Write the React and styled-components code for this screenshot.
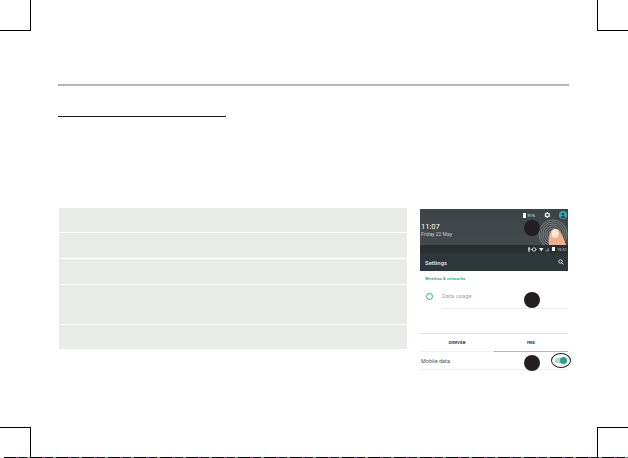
import React from 'react'
import styled, { createGlobalStyle } from 'styled-components'

const GlobalStyle = createGlobalStyle`
  html, body {
    margin: 0;
    padding: 0;
    background: #fff;
    font-family: "Roboto", "Liberation Sans", sans-serif;
  }
`

const Page = styled.div`
  position: relative;
  width: 628px;
  height: 458px;
  overflow: hidden;
  box-sizing: border-box;
  padding: 84px 59px 0 58px;
  background: #fff;
`

const CropMark = styled.div`
  position: absolute;
  width: 31px;
  height: 31px;
  box-sizing: border-box;
  ${p => (p.$top ? 'top: 0; border-bottom: 1px solid #000;' : 'bottom: 0; border-top: 1px solid #000;')}
  ${p => (p.$left ? 'left: 0; border-right: 1px solid #000;' : 'right: 0; border-left: 1px solid #000;')}
`

const BleedEdge = styled.div`
  position: absolute;
  left: 4px;
  right: 0;
  bottom: 0;
  height: 1px;
  background: repeating-linear-gradient(
    90deg,
    #000 0 12px,
    #c4566a 12px 13px,
    #3a4bb0 13px 15px,
    #111 15px 23px,
    #6fb58a 23px 25px,
    #888 25px 26px
  );
`

const TitleRule = styled.div`
  height: 2px;
  background: #b5b5b5;
`

const HeadingLine = styled.div`
  width: 168px;
  height: 1px;
  margin-top: 30px;
  background: #1a1a1a;
`

const Content = styled.div`
  display: flex;
  align-items: flex-start;
  margin-top: 91px;
`

const Steps = styled.div`
  display: flex;
  flex-direction: column;
  gap: 1px;
  width: 348px;
  margin-left: 1px;
`

const Step = styled.div`
  height: ${p => p.$h}px;
  background: #e9ebe8;
`

const Shot = styled.div`
  position: relative;
  width: 148px;
  height: 163px;
  margin: 1px 0 0 13px;
  color: #555;
`

const Shade = styled.div`
  position: relative;
  height: 36px;
  overflow: hidden;
  box-sizing: border-box;
  padding: 13px 0 0 1px;
  background: linear-gradient(180deg, #3c4346, #44494c);
  color: #fff;
`

const Clock = styled.div`
  font-size: 7.5px;
  font-weight: 400;
  line-height: 9px;
`

const DateLine = styled.div`
  font-size: 5px;
  line-height: 6px;
  color: #c9cdcf;
`

const QuickIcons = styled.div`
  position: absolute;
  top: 2px;
  right: 1px;
  display: flex;
  align-items: center;
  gap: 8px;
`

const BatteryGroup = styled.div`
  display: flex;
  align-items: center;
  gap: 2px;
  font-size: 4px;
  color: #e8e8e8;
`

const Battery = styled.span`
  display: block;
  width: 3px;
  height: ${p => p.$h || 5}px;
  background: #f4f4f4;
`

const StatusBar = styled.div`
  display: flex;
  align-items: center;
  justify-content: flex-end;
  gap: 2px;
  height: 8px;
  padding-right: 1px;
  background: #2a2e30;
  color: #d8dadb;
  font-size: 4px;
`

const SettingsBar = styled.div`
  display: flex;
  align-items: center;
  justify-content: space-between;
  height: 18px;
  padding: 0 4px 0 5px;
  background: #2d363a;
  color: #e6e8e8;
  font-size: 6px;
  font-weight: 500;
`

const SectionLabel = styled.div`
  margin: 5px 0 0 5px;
  font-size: 4.400px;
  line-height: 5px;
  font-weight: 700;
  color: #3fae96;
`

const UsageRow = styled.div`
  display: flex;
  align-items: center;
  height: 25px;
  margin-top: 3px;
`

const RingSlot = styled.div`
  box-sizing: border-box;
  width: 22px;
  padding-left: 6px;
`

const Ring = styled.span`
  display: block;
  box-sizing: border-box;
  width: 7px;
  height: 7px;
  border-radius: 50%;
  border: 1.500px solid #35a78e;
`

const UsageLabel = styled.div`
  flex: 1;
  align-self: stretch;
  display: flex;
  align-items: center;
  border-bottom: 1px solid #eceeee;
  font-size: 5.500px;
  letter-spacing: 0.2px;
  color: #9a9e9f;
`

const Tabs = styled.div`
  display: flex;
  height: 18px;
  margin-top: 24px;
  border-top: 1px solid #e3e5e5;
`

const Tab = styled.div`
  flex: 1;
  display: flex;
  align-items: center;
  justify-content: center;
  box-sizing: border-box;
  border-bottom: 1px solid ${p => (p.$active ? '#7fcfba' : '#eef0f0')};
  font-size: 3.500px;
  font-weight: 700;
  color: #333;
`

const DataRow = styled.div`
  display: flex;
  align-items: center;
  height: 17px;
  padding-left: 1px;
  border-bottom: 1px solid #eef0f0;
  font-size: 5.500px;
  color: #555;
`

const Callout = styled.div`
  position: absolute;
  left: 104px;
  top: ${p => p.$top}px;
  width: 16px;
  height: 16px;
  border-radius: 50%;
  background: #231f20;
`

const ToggleMark = styled.div`
  position: absolute;
  left: 131px;
  top: 144px;
  width: 20px;
  height: 15px;
  box-sizing: border-box;
  border: 1px solid #222;
  border-radius: 50%;
`

const ToggleTrack = styled.div`
  position: absolute;
  left: 3px;
  top: 4px;
  width: 12px;
  height: 5px;
  border-radius: 3px;
  background: #a5dccb;
`

const ToggleKnob = styled.div`
  position: absolute;
  left: 8px;
  top: 3px;
  width: 7px;
  height: 7px;
  border-radius: 50%;
  background: #2f9f88;
`

const Touch = styled.svg`
  position: absolute;
  right: 0;
  bottom: 0;
`

const Gear = () => (
  <svg width="8" height="8" viewBox="0 0 24 24" fill="#f2f2f2">
    <path d="M19.400 13a7.500 7.500 0 0 0 0-2l2.100-1.600-2-3.500-2.500 1a7.500 7.500 0 0 0-1.700-1L15 3.300h-4l-.4 2.600a7.500 7.500 0 0 0-1.700 1l-2.500-1-2 3.500L6.500 11a7.500 7.500 0 0 0 0 2l-2.100 1.600 2 3.500 2.500-1a7.500 7.500 0 0 0 1.700 1l.4 2.600h4l.4-2.600a7.500 7.500 0 0 0 1.700-1l2.500 1 2-3.500zM13 15.500a3.500 3.500 0 1 1 0-7 3.500 3.500 0 0 1 0 7z" />
  </svg>
)

const Avatar = () => (
  <svg width="8" height="8" viewBox="0 0 24 24">
    <circle cx="12" cy="12" r="12" fill="#2fa9b5" />
    <circle cx="12" cy="9" r="4" fill="#35464c" />
    <path d="M4.500 19c1.500-3.500 4.500-5 7.500-5s6 1.500 7.500 5a11 11 0 0 1-15 0z" fill="#35464c" />
  </svg>
)

const Search = () => (
  <svg width="6" height="6" viewBox="0 0 24 24" fill="none" stroke="#e6e8e8" strokeWidth="3.500">
    <circle cx="10" cy="10" r="7" />
    <path d="M15 15l7 7" />
  </svg>
)

const TinyStatus = () => (
  <svg width="22" height="5" viewBox="0 0 44 10" fill="#eee">
    <path d="M1 0h2v3h2v2H3v5H1V5H-1V3h2z" />
    <circle cx="12" cy="5" r="3.500" fill="none" stroke="#eee" strokeWidth="1.500" />
    <path d="M7 4h2v2H7zM15 4h2v2h-2z" />
    <path d="M22 2h9l-4.500 7z" />
    <path d="M42 1v8h-8z" fill="#777" />
  </svg>
)

const FingerTouch = () => (
  <Touch width="34" height="26" viewBox="0 0 34 26">
    {[4, 6, 8, 10, 12, 14].map(r => (
      <circle key={r} cx="19" cy="15" r={r} fill="none" stroke="#b4b9bb" strokeWidth="0.500" />
    ))}
    <path d="M15 26 C14 20 15 12 20 10 C24 9 26 12 28 16 C30 20 31 23 32 26 Z" fill="#f0b08c" />
    <ellipse cx="21" cy="14.500" rx="3.500" ry="4.500" fill="#fbe6dc" />
  </Touch>
)

export default function App() {
  return (
    <Page>
      <GlobalStyle />
      <CropMark $top $left />
      <CropMark $top />
      <CropMark $left />
      <CropMark />
      <BleedEdge />

      <TitleRule />
      <HeadingLine />

      <Content>
        <Steps>
          {[24, 25, 25, 39, 24].map((h, i) => (
            <Step key={i} $h={h} />
          ))}
        </Steps>

        <Shot>
          <Shade>
            <Clock>11:07</Clock>
            <DateLine>Friday 22 May</DateLine>
            <FingerTouch />
            <QuickIcons>
              <BatteryGroup>
                <Battery />
                91%
              </BatteryGroup>
              <Gear />
              <Avatar />
            </QuickIcons>
          </Shade>
          <StatusBar>
            <TinyStatus />
            <Battery $h={4} />
            10:51
          </StatusBar>
          <SettingsBar>
            Settings
            <Search />
          </SettingsBar>
          <SectionLabel>Wireless &amp; networks</SectionLabel>
          <UsageRow>
            <RingSlot>
              <Ring />
            </RingSlot>
            <UsageLabel>Data usage</UsageLabel>
          </UsageRow>
          <Tabs>
            <Tab>OVERVIEW</Tab>
            <Tab $active>FREE</Tab>
          </Tabs>
          <DataRow>Mobile data</DataRow>

          <Callout $top={11} />
          <Callout $top={83} />
          <Callout $top={146} />
          <ToggleMark>
            <ToggleTrack />
            <ToggleKnob />
          </ToggleMark>
        </Shot>
      </Content>
    </Page>
  )
}
